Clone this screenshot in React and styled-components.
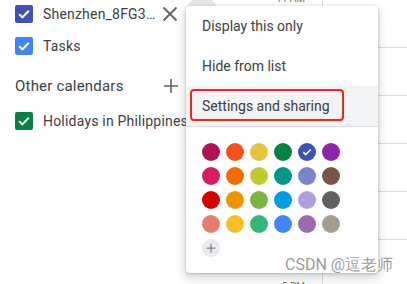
import React from 'react';
import styled, { createGlobalStyle } from 'styled-components';

const GlobalStyle = createGlobalStyle`
  body {
    margin: 0;
    background: #fff;
    font-family: Roboto, "Liberation Sans", Arial, sans-serif;
    overflow: hidden;
  }
`;

// calendar colour palette, row by row
const palette = [
  ['#ad1457', '#f4511e', '#e4c441', '#0b8043', '#3f51b5', '#8e24aa'],
  ['#d81b60', '#ef6c00', '#c0ca33', '#009688', '#7986cb', '#795548'],
  ['#d50000', '#f09300', '#7cb342', '#039be5', '#b39ddb', '#616161'],
  ['#e67c73', '#f6bf26', '#33b679', '#4285f4', '#9e69af', '#a79b8e'],
];
const selectedColor = '#3f51b5';

const hours = ['11 AM', '12 PM', '1 PM', '2 PM', '3 PM', '4 PM', '5 PM'];

const CheckMark = ({ size = 18 }) => (
  <svg width={size} height={size} viewBox="0 0 18 18">
    <path d="M4.2 9.2 7.4 12.4 13.8 5.8" fill="none" stroke="#fff" strokeWidth="2" />
  </svg>
);

const CloseIcon = () => (
  <svg width="16" height="16" viewBox="0 0 16 16">
    <path d="M1.5 1.5 14.5 14.5 M14.5 1.5 1.5 14.5" stroke="#5f6368" strokeWidth="1.8" />
  </svg>
);

const PlusIcon = ({ size = 16, color = '#5f6368', width = 1.6 }) => (
  <svg width={size} height={size} viewBox="0 0 16 16">
    <path d="M8 1v14M1 8h14" stroke={color} strokeWidth={width} />
  </svg>
);

export default function App() {
  return (
    <>
      <GlobalStyle />
      <Page>
        <Sidebar>
          <CalendarRow>
            <Checkbox color="#3f51b5">
              <CheckMark />
            </Checkbox>
            <CalendarName>Shenzhen_8FG3…</CalendarName>
            <IconButton>
              <CloseIcon />
            </IconButton>
            <MoreButton />
          </CalendarRow>
          <CalendarRow>
            <Checkbox color="#4285f4">
              <CheckMark />
            </Checkbox>
            <CalendarName>Tasks</CalendarName>
          </CalendarRow>
          <SectionHeader>
            <SectionTitle>Other calendars</SectionTitle>
            <IconButton>
              <PlusIcon />
            </IconButton>
          </SectionHeader>
          <CalendarRow>
            <Checkbox color="#0b8043">
              <CheckMark />
            </Checkbox>
            <CalendarName>Holidays in Philippines</CalendarName>
          </CalendarRow>
        </Sidebar>

        <DayView>
          <TimeColumn>
            {hours.map((h) => (
              <TimeLabel key={h}>{h}</TimeLabel>
            ))}
          </TimeColumn>
          <Grid>
            {hours.map((h) => (
              <Slot key={h} />
            ))}
          </Grid>
        </DayView>

        <Menu>
          <MenuItem>Display this only</MenuItem>
          <MenuItem>Hide from list</MenuItem>
          <MenuItem active>
            Settings and sharing
            <Outline />
          </MenuItem>
          <Divider />
          <Swatches>
            {palette.flat().map((c) => (
              <Swatch key={c} color={c}>
                {c === selectedColor && <CheckMark size={14} />}
              </Swatch>
            ))}
            <AddSwatch>
              <PlusIcon size={10} color="#80868b" width={2} />
            </AddSwatch>
          </Swatches>
        </Menu>

        <Watermark>CSDN @逗老师</Watermark>
      </Page>
    </>
  );
}

const Page = styled.div`
  position: relative;
  display: flex;
  width: 407px;
  height: 284px;
  overflow: hidden;
`;

const Sidebar = styled.div`
  width: 256px;
  flex-shrink: 0;
  display: flex;
  flex-direction: column;
  padding-left: 15px;
  box-sizing: border-box;
`;

const CalendarRow = styled.div`
  display: flex;
  align-items: center;
  height: 28px;
  margin-bottom: 4px;
  white-space: nowrap;
`;

const Checkbox = styled.span`
  width: 18px;
  height: 18px;
  border-radius: 2px;
  background: ${(p) => p.color};
  display: flex;
  align-items: center;
  justify-content: center;
  flex-shrink: 0;
`;

const CalendarName = styled.span`
  margin-left: 10px;
  font-size: 14px;
  color: #3c4043;
  letter-spacing: 0.2px;
  width: 108px;
`;

const IconButton = styled.span`
  width: 16px;
  height: 16px;
  display: flex;
  margin-left: 11px;
`;

// hover circle of the calendar's options button, mostly under the menu
const MoreButton = styled.span`
  align-self: flex-start;
  flex-shrink: 0;
  width: 30px;
  height: 30px;
  border-radius: 50%;
  background: #e8e8e9;
  margin-left: 9px;
  margin-top: -4px;
`;

const SectionHeader = styled.div`
  display: flex;
  align-items: center;
  height: 28px;
  margin-top: 8px;
  margin-bottom: 7px;
  white-space: nowrap;
`;

const SectionTitle = styled.span`
  font-size: 15px;
  letter-spacing: 0.2px;
  color: #3c4043;
  width: 137px;
`;

const DayView = styled.div`
  display: flex;
  flex: 1;
`;

const TimeColumn = styled.div`
  width: 49px;
  display: flex;
  flex-direction: column;
  align-items: flex-end;
  padding-right: 17px;
  margin-top: -7px;
`;

const TimeLabel = styled.div`
  height: 48px;
  font-size: 10px;
  line-height: 12px;
  color: #70757a;
  flex-shrink: 0;
`;

const Grid = styled.div`
  flex: 1;
  border-left: 1px solid #dadce0;
  display: flex;
  flex-direction: column;
`;

const Slot = styled.div`
  height: 48px;
  flex-shrink: 0;
  box-sizing: border-box;
  border-bottom: 1px solid #dadce0;
`;

const Menu = styled.div`
  position: absolute;
  left: 186px;
  top: 6px;
  width: 192px;
  background: #fff;
  border-radius: 4px;
  box-shadow: 0 4px 8px 3px rgba(60, 64, 67, 0.15), 0 1px 3px rgba(60, 64, 67, 0.3);
  display: flex;
  flex-direction: column;
`;

const MenuItem = styled.div`
  position: relative;
  height: 40px;
  display: flex;
  align-items: center;
  padding-left: 16px;
  font-size: 14px;
  color: #3c4043;
  background: ${(p) => (p.active ? '#f1f3f4' : 'transparent')};
`;

const Outline = styled.span`
  position: absolute;
  left: 4px;
  top: 3px;
  width: 154px;
  height: 32px;
  box-sizing: border-box;
  border: 2px solid #f0281c;
  border-radius: 4px;
`;

const Divider = styled.div`
  height: 1px;
  background: #dadce0;
`;

const Swatches = styled.div`
  display: grid;
  grid-template-columns: repeat(6, 18px);
  grid-auto-rows: 18px;
  gap: 6px;
  padding: 16px;
`;

const Swatch = styled.span`
  width: 18px;
  height: 18px;
  border-radius: 50%;
  background: ${(p) => p.color};
  display: flex;
  align-items: center;
  justify-content: center;
`;

const AddSwatch = styled(Swatch).attrs({ color: '#e8eaed' })``;

const Watermark = styled.div`
  position: absolute;
  left: 285px;
  top: 255px;
  font-size: 16px;
  color: rgba(120, 120, 120, 0.75);
  text-shadow: 0 0 1px #fff, 0 0 2px #fff;
  white-space: nowrap;
`;
